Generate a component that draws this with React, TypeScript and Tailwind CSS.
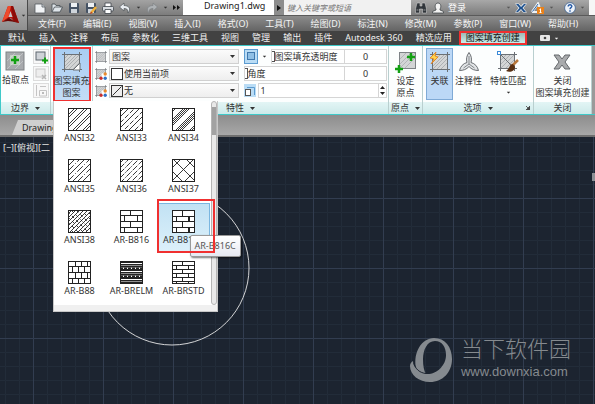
import type { ReactNode } from "react";
import clsx from "clsx";

const MENUS = [
  "文件(F)",
  "编辑(E)",
  "视图(V)",
  "插入(I)",
  "格式(O)",
  "工具(T)",
  "绘图(D)",
  "标注(N)",
  "修改(M)",
  "参数(P)",
  "窗口(W)",
  "帮助(H)",
];

const TABS = [
  "默认",
  "插入",
  "注释",
  "布局",
  "参数化",
  "三维工具",
  "视图",
  "管理",
  "输出",
  "插件",
  "Autodesk 360",
  "精选应用",
];

const HATCHES = [
  "ANSI32",
  "ANSI33",
  "ANSI34",
  "ANSI35",
  "ANSI36",
  "ANSI37",
  "ANSI38",
  "AR-B816",
  "AR-B816C",
  "AR-B88",
  "AR-BRELM",
  "AR-BRSTD",
];

/* ---------- hatch swatches ---------- */

interface DiagonalProps {
  offsets: number[];
  dash?: string;
  flip?: boolean;
}

// 45 degree lines, x + y = offset, clipped by the swatch svg
function Diagonals({ offsets, dash, flip }: DiagonalProps) {
  return (
    <g transform={flip ? "matrix(-1 0 0 1 23 0)" : undefined}>
      {offsets.map((o) => (
        <path key={o} d={`M0 ${o}L${o} 0`} strokeDasharray={dash} />
      ))}
    </g>
  );
}

interface BricksProps {
  rows: number[];
  step: number;
  double?: boolean;
}

function Bricks({ rows, step, double }: BricksProps) {
  const parts: string[] = [];
  rows.forEach((y, i) => {
    const bottom = rows[i + 1] ?? 23;
    parts.push(`M0 ${y + 0.5}H23`);
    for (let x = i % 2 ? 4 : 4 + step / 2; x < 23; x += step) {
      parts.push(`M${Math.floor(x) + 0.5} ${y}V${bottom}`);
    }
    if (double && i % 2) parts.push(`M16.5 ${y}V${bottom}`);
  });
  return <path d={parts.join("")} strokeWidth="1" />;
}

function HatchPattern({ name }: { name: string }) {
  switch (name) {
    case "ANSI32":
      return <Diagonals offsets={[7, 10, 17, 20, 27, 30, 37, 40]} />;
    case "ANSI33":
      return (
        <>
          <Diagonals offsets={[9, 20, 31, 42]} />
          <Diagonals offsets={[4, 15, 26, 37]} dash="5 2" />
        </>
      );
    case "ANSI34":
      return (
        <Diagonals offsets={[4, 12, 14, 16, 18, 26, 28, 30, 32, 40, 42]} />
      );
    case "ANSI35":
      return (
        <>
          <Diagonals offsets={[7, 17, 27, 37]} />
          <Diagonals offsets={[12, 22, 32]} dash="8 2 1 2" />
        </>
      );
    case "ANSI36":
      return (
        <Diagonals offsets={[4, 9, 14, 19, 24, 29, 34, 39, 43]} dash="6 1 1 1" />
      );
    case "ANSI37":
      return (
        <>
          <Diagonals offsets={[9, 22, 35]} />
          <Diagonals offsets={[9, 22, 35]} flip />
        </>
      );
    case "ANSI38":
      return (
        <>
          <Diagonals offsets={[4, 8, 12, 16, 20, 24, 28, 32, 36, 40]} />
          <Diagonals offsets={[5, 10, 15, 20, 25, 30, 35, 40]} dash="3 3" flip />
        </>
      );
    case "AR-B816":
      return <Bricks rows={[0, 5, 11, 17]} step={13} />;
    case "AR-B816C":
      return <Bricks rows={[0, 6, 11, 17]} step={13} double />;
    case "AR-B88":
      return <Bricks rows={[0, 5, 11, 17]} step={6} />;
    case "AR-BRELM":
      return (
        <>
          <path
            d="M0 1H23M0 5.5H23M0 9H23M0 13.5H23M0 17H23M0 21.5H23"
            strokeWidth="2"
          />
          <path d="M0 3.5H23M0 11.5H23M0 19.5H23" strokeWidth="1" />
          <path
            d="M0 7.5H23M0 15.5H23"
            strokeDasharray="3 1"
            strokeWidth="2"
          />
        </>
      );
    default:
      return <Bricks rows={[0, 4, 8, 12, 16, 20]} step={12} />;
  }
}

function Swatch({ name }: { name: string }) {
  return (
    <svg
      viewBox="0 0 23 23"
      className="h-[23px] w-[23px] shrink-0 overflow-hidden bg-white"
      fill="none"
      stroke="#222"
      strokeWidth="0.9"
    >
      <HatchPattern name={name} />
      <rect x="0.5" y="0.5" width="22" height="22" strokeWidth="1" />
    </svg>
  );
}

/* ---------- icons ---------- */

function Caret({ className }: { className?: string }) {
  return (
    <svg viewBox="0 0 5 3" className={clsx("h-[3px] w-[5px] shrink-0", className)}>
      <path d="M0 0H5L2.5 3Z" fill="currentColor" />
    </svg>
  );
}

function AppLogo() {
  return (
    <svg viewBox="0 0 17 18" className="h-[18px] w-[17px]">
      <path d="M6 0H11L17 17L11.500 15L9 12L4 14L0 16Z" fill="#b5140c" />
      <path d="M6 0H9L6.500 11L0 16Z" fill="#ee4a2c" />
      <path d="M9 0H11L17 17L11.500 15Z" fill="#8c0d08" />
      <path d="M8.500 5L10.500 11L6.500 11Z" fill="#c9c9c9" />
      <path d="M0 16L7 12L12 15L17 17L10 15.500L6 15Z" fill="#6d0805" />
    </svg>
  );
}

// hatch preview with the crop marks that all ribbon hatch icons share
function HatchIcon({ size, extra }: { size: "sm" | "lg"; extra?: ReactNode }) {
  return (
    <svg
      viewBox="0 0 20 20"
      className={size === "sm" ? "h-3 w-3 shrink-0" : "h-5 w-5 shrink-0"}
      fill="none"
    >
      <rect x="2.500" y="2.500" width="15" height="15" fill="#d3d5d6" />
      <path
        d="M3 6L6 3M3 10L10 3M3 14L14 3M3 17L17 3M7 17L17 7M11 17L17 11"
        stroke="#a3a6a9"
        strokeWidth="0.8"
      />
      <path d="M2.500 0V20M17.500 0V20M0 2.500H20M0 17.500H20" stroke="#6b7075" />
      {extra}
    </svg>
  );
}

const COLOR_DOTS = (
  <>
    <rect x="11" y="9" width="9" height="11" fill="#fff" />
    <circle cx="17" cy="10" r="2.800" fill="#e98a2c" />
    <circle cx="10" cy="17" r="2.800" fill="#c9302c" />
    <circle cx="17" cy="17" r="2.800" fill="#2f6fc4" />
  </>
);

function PlusMark({ x, y, s = 4 }: { x: number; y: number; s?: number }) {
  return (
    <path
      d={`M${x - s} ${y}H${x + s}M${x} ${y - s}V${y + s}`}
      stroke="#12a012"
      strokeWidth="2.500"
    />
  );
}

function PickPointIcon() {
  return (
    <svg viewBox="0 0 20 20" className="h-5 w-5">
      <rect x="1" y="1" width="18" height="18" fill="#a7aaad" stroke="#7f8386" />
      <path d="M2 10L10 2M2 18L18 2M10 18L18 10" stroke="#bfc2c4" />
      <rect x="5" y="4" width="10" height="10" fill="#dff3dc" opacity=".5" />
      <PlusMark x={10} y={9} />
    </svg>
  );
}

function OriginIcon() {
  return (
    <svg viewBox="0 0 22 22" className="h-[22px] w-[22px]" fill="none">
      <rect x="4.500" y="1.500" width="16" height="16" fill="#d3d5d6" stroke="#7d8286" />
      <path d="M5 8L11 2M5 13L16 2M5 17L20 2M10 17L20 7" stroke="#a9acaf" strokeWidth=".8" />
      <PlusMark x={16} y={6} />
      <PlusMark x={4} y={18} />
    </svg>
  );
}

function SmallBoundaryIcon({ kind }: { kind: "add" | "remove" | "recreate" }) {
  const muted = kind !== "add";
  return (
    <svg viewBox="0 0 14 14" className="h-[14px] w-[14px]" fill="none">
      {kind === "recreate" ? (
        <path d="M2.500 1V12M5.500 12V6.500H12.500V12ZM6 2.500H12" stroke="#c4c4c4" />
      ) : (
        <rect
          x="2"
          y="2"
          width="9"
          height="8"
          fill={muted ? "#eee" : "#cfd3d8"}
          stroke={muted ? "#c8c8c8" : "#5d666e"}
        />
      )}
      {kind === "add" && <path d="M8 10.500H14M11 7.500V13.500" stroke="#12a012" strokeWidth="2" />}
      {kind === "remove" && <path d="M8 8L12 12M12 8L8 12" stroke="#b5b5b5" strokeWidth="1.500" />}
      {kind === "recreate" && <rect x="8" y="8" width="2" height="2" fill="#bbb" />}
    </svg>
  );
}

// three tapered blades around a centre point
function AnnotativeIcon() {
  return (
    <svg viewBox="0 0 20 20" className="h-5 w-5" fill="#e1e4e6" stroke="#5c6165" strokeWidth=".9">
      <path d="M10 0.500C12.500 4 13 7 12 10.500C16 11.500 18.500 14.500 19.500 18.500C16 18.500 12.500 17.500 10 14.500C7.500 17.500 4 18.500 0.500 18.500C1.500 14.500 4 11.500 8 10.500C7 7 7.500 4 10 0.500Z" />
      <path d="M10 4V12L4.500 16M10 12L15.500 16" fill="none" strokeWidth=".7" />
    </svg>
  );
}

function MatchIcon() {
  return (
    <svg viewBox="0 0 22 22" className="h-[22px] w-[22px]" fill="none">
      <rect x="3.500" y="3.500" width="14" height="14" fill="#d3d5d6" />
      <path d="M4 9L9 4M4 13L13 4M4 17L17 4M9 17L17 9" stroke="#a3a6a9" strokeWidth=".8" />
      <path d="M3.500 1V20M17.500 1V20M1 3.500H20M1 17.500H20M4 4L17 17" stroke="#6b7075" />
      <rect x="0.500" y="0.500" width="3" height="3" fill="#fff" stroke="#3b8ad8" />
      <path d="M21 9L15 15" stroke="#b9793e" strokeWidth="2.500" />
      <path d="M16 13C12 13 13 18 9 20C13 22 18 20 18 16Z" fill="#5a3013" />
    </svg>
  );
}

function CloseIcon() {
  return (
    <svg viewBox="0 0 18 16" className="h-4 w-[18px]">
      <path
        d="M1 1H6L9 5L12 1H17L12 8L17 15H12L9 11L6 15H1L6 8Z"
        fill="#a9abad"
        stroke="#65696c"
      />
    </svg>
  );
}

function DocIcon() {
  return (
    <svg viewBox="0 0 12 12" className="h-3 w-3" fill="#f2f4f6" stroke="#555b61" strokeWidth=".8">
      <path d="M1 2H8L11 5V11H1Z" />
      <path d="M8 2V5H11" fill="#ccd2d8" />
    </svg>
  );
}

function OpenIcon() {
  return (
    <svg viewBox="0 0 12 12" className="h-3 w-3" fill="#dfe5ea" stroke="#454b51" strokeWidth=".8">
      <path d="M1 10V2H4L5 3.500H9V5" />
      <path d="M1 10L3.500 5H11.500L9 10Z" />
    </svg>
  );
}

function SaveIcon({ pencil }: { pencil?: boolean }) {
  return (
    <svg viewBox="0 0 12 12" className="h-3 w-3">
      <rect x="1" y="1" width="10" height="10" rx="1" fill="#465364" />
      <rect x="3" y="1" width="6" height="4" fill="#eef1f4" />
      <rect x="3" y="7" width="6" height="4" fill="#cfd5db" />
      {pencil && <path d="M11 5L6 11" stroke="#f0b13a" strokeWidth="2.500" />}
      {pencil && <path d="M5 12L6 9.500L7.500 11Z" fill="#b63a22" />}
    </svg>
  );
}

function PrintIcon() {
  return (
    <svg viewBox="0 0 12 12" className="h-3 w-3" strokeWidth=".8" stroke="#3f454b">
      <path d="M3 5V1H9V5" fill="#fff" />
      <rect x="0.500" y="4.500" width="11" height="4.500" rx="1" fill="#d8dce0" />
      <path d="M3 7.500H9V11.500H3Z" fill="#fff" />
    </svg>
  );
}

function UndoIcon({ redo }: { redo?: boolean }) {
  return (
    <svg viewBox="0 0 12 12" className={clsx("h-3 w-3", redo && "-scale-x-100")}>
      <path
        d="M5 1L0.500 5L5 9V6.500C8 6.500 9.500 8 9 11C12.500 7 10 3.500 5 3.500Z"
        fill={redo ? "#aeb2b5" : "#e9edf1"}
        stroke={redo ? "#7e8285" : "#4d5358"}
        strokeWidth=".7"
      />
    </svg>
  );
}

function BinocularsIcon() {
  return (
    <svg viewBox="0 0 12 12" className="h-3 w-3" fill="#30353a" stroke="#dadada" strokeWidth=".5">
      <path d="M2 1H5V4H7V1H10L11.500 7V11H7.500V7H4.500V11H0.500V7Z" />
      <path d="M1.500 8H3.500M8.500 8H10.500" stroke="#fff" />
    </svg>
  );
}

function UserIcon() {
  return (
    <svg viewBox="0 0 12 12" className="h-3 w-3" fill="#f3f3f3" stroke="#41464a" strokeWidth=".8">
      <path d="M0.500 11V9.500L4 8V7C2.500 5 3 1 6 1S9.500 5 8 7V8L11.500 9.500V11Z" />
    </svg>
  );
}

function ExchangeIcon() {
  return (
    <svg viewBox="0 0 12 12" className="h-3 w-3">
      <path d="M0 1.500H4L6 4L8 1.500H12L8.500 6L12 10.500H8L6 8L4 10.500H0L3.500 6Z" fill="#e8eef5" />
      <path d="M1 2H3.500L6 5L9 2H11L7.500 6L11 10H8.500L6 7L3 10H1L4.500 6Z" fill="#1c4f8c" />
    </svg>
  );
}

function CloudIcon() {
  return (
    <svg viewBox="0 0 14 12" className="h-3 w-[14px]" fill="none">
      <path d="M1 10L7 1.500L8.500 5M1 10H6" stroke="#eef2f6" strokeWidth="2.200" />
      <path d="M1.500 9.500L7 2" stroke="#2f66a8" />
      <rect x="6" y="5" width="7" height="7" fill="#e8821c" />
      <path d="M9.500 6.500V10.500M8.500 10.500H10.500M8.500 7.500H9.500" stroke="#fff" />
    </svg>
  );
}

function HelpIcon() {
  return (
    <svg viewBox="0 0 12 12" className="h-3 w-3" fill="none">
      <circle cx="6" cy="6" r="5.400" fill="#eef3f9" stroke="#3f6290" strokeWidth=".8" />
      <path d="M4.200 4.500C4.200 2 8 2.300 7.800 4.500C7.700 5.700 6 5.700 6 7.200M6 8.300V9.800" stroke="#2459a6" strokeWidth="1.400" />
    </svg>
  );
}

function CameraIcon() {
  return (
    <svg viewBox="0 0 10 6" className="h-[6px] w-[10px]">
      <rect width="10" height="6" rx="1" fill="#e6e6e6" />
      <circle cx="5" cy="3" r="1.300" fill="#444" />
    </svg>
  );
}

/* ---------- bars ---------- */

function ToolButton({ label, children }: { label: string; children: ReactNode }) {
  return (
    <button type="button" aria-label={label} className="flex shrink-0 items-center">
      {children}
    </button>
  );
}

function TitleBar() {
  return (
    <div className="flex h-[15px] items-stretch">
      <div className="flex w-[155px] shrink-0 items-center gap-[5px] bg-linear-to-b from-[#a3a3a3] to-[#7c7c7c] pl-[6px] text-[#333]">
        <ToolButton label="新建"><DocIcon /></ToolButton>
        <ToolButton label="打开"><OpenIcon /></ToolButton>
        <ToolButton label="保存"><SaveIcon /></ToolButton>
        <ToolButton label="另存为"><SaveIcon pencil /></ToolButton>
        <ToolButton label="打印"><PrintIcon /></ToolButton>
        <ToolButton label="放弃"><UndoIcon /></ToolButton>
        <Caret className="scale-75" />
        <ToolButton label="重做"><UndoIcon redo /></ToolButton>
        <Caret className="scale-75" />
        <svg viewBox="0 0 7 5" className="h-[5px] w-[7px]">
          <path d="M0 0L3 2.500L0 5ZM4 0L7 2.500L4 5Z" fill="#111" />
        </svg>
      </div>
      <div className="w-[91px] shrink-0 bg-white pl-[21px] text-[9px] leading-3 text-[#222]">
        Drawing1.dwg
      </div>
      <button
        type="button"
        aria-label="展开搜索"
        className="flex w-[10px] shrink-0 items-center justify-center bg-[#8d8d8d]"
      >
        <svg viewBox="0 0 4 6" className="h-[6px] w-1">
          <path d="M0 0L4 3L0 6Z" fill="#111" />
        </svg>
      </button>
      <input
        type="text"
        aria-label="搜索"
        placeholder="键入关键字或短语"
        className="min-w-0 flex-1 bg-[#f1f1f1] pl-[3px] text-[8px] italic outline-none placeholder:text-[#777]"
      />
      <div className="flex w-[178px] shrink-0 items-center bg-linear-to-b from-[#a8a8a8] to-[#7c7c7c] pl-1 text-[#555]">
        <ToolButton label="查找"><BinocularsIcon /></ToolButton>
        <button type="button" className="ml-[5px] flex items-center gap-1 text-[9px] leading-3 text-white">
          <UserIcon />
          登录
        </button>
        <Caret className="ml-auto scale-75" />
        <div className="ml-1 flex items-center gap-1">
          <ToolButton label="Exchange"><ExchangeIcon /></ToolButton>
          <ToolButton label="A360"><CloudIcon /></ToolButton>
          <Caret className="scale-75" />
        </div>
        <div className="ml-[10px] flex items-center gap-1 pr-1">
          <ToolButton label="帮助"><HelpIcon /></ToolButton>
          <Caret className="scale-75" />
        </div>
      </div>
      <div className="w-[6px] shrink-0 bg-[#f6f6f6]" />
    </div>
  );
}

function Header() {
  return (
    <header>
      <div className="flex">
        <button
          type="button"
          aria-label="应用程序菜单"
          className="flex w-7 shrink-0 items-center justify-center gap-[2px] border-r border-b border-[#4a4a4a] bg-linear-to-b from-[#b4b4b4] to-[#8e8e8e] text-[#333]"
        >
          <AppLogo />
          <Caret className="scale-75" />
        </button>
        <div className="min-w-0 flex-1">
          <TitleBar />
          <nav className="flex h-4 items-center gap-[17px] overflow-hidden border-t border-[#5a5a5a] bg-linear-to-b from-[#8c8c8c] to-[#646464] pl-[10px] text-[9px] leading-3 whitespace-nowrap text-[#f4f4f4]">
            {MENUS.map((menu) => (
              <button key={menu} type="button" className="shrink-0">
                {menu}
              </button>
            ))}
          </nav>
        </div>
      </div>
      <nav className="flex h-[14px] items-center gap-[13px] overflow-hidden bg-[#424242] pl-2 text-[9px] leading-3 whitespace-nowrap text-[#f0f0f0]">
        {TABS.map((tab) => (
          <button key={tab} type="button" className="shrink-0">
            {tab}
          </button>
        ))}
        <button
          type="button"
          className="-ml-[6px] flex h-[14px] shrink-0 items-center border-2 border-[#f03030] bg-linear-to-b from-[#9fb9b6] to-[#c9efec] px-[5px] text-[#111]"
        >
          图案填充创建
        </button>
        <button type="button" aria-label="录制" className="flex shrink-0 items-center gap-1">
          <CameraIcon />
          <Caret className="scale-75" />
        </button>
      </nav>
    </header>
  );
}

/* ---------- ribbon ---------- */

interface PanelProps {
  title: string;
  caret?: boolean;
  launcher?: boolean;
  className: string;
  children: ReactNode;
}

function Panel({ title, caret, launcher, className, children }: PanelProps) {
  return (
    <section className={clsx("flex flex-col border-r border-[#b9cfcf]", className)}>
      <div className="flex h-14 justify-center">{children}</div>
      <div className="relative flex h-3 items-center justify-center gap-[6px] bg-linear-to-b from-[#e3f5f5] to-[#cdeaea] leading-3 text-[#333]">
        {title}
        {caret && <Caret />}
        {launcher && (
          <svg viewBox="0 0 4 4" className="absolute right-[3px] h-1 w-1">
            <path d="M4 0V4H0ZM0 0L3 3" fill="#444" stroke="#444" strokeWidth=".8" />
          </svg>
        )}
      </div>
    </section>
  );
}

const SELECT_CLASS =
  "h-[15px] w-full min-w-0 appearance-none border border-[#d0d0d0] bg-linear-to-b from-[#fbfbfb] to-[#eeeeee] pr-3 text-[9px] leading-3 text-[#333] outline-none";

interface ComboProps {
  label: string;
  value: string;
  icon: ReactNode;
  chip?: ReactNode;
}

function Combo({ label, value, icon, chip }: ComboProps) {
  return (
    <label className="flex items-center gap-[2px]">
      {icon}
      <span className="relative flex min-w-0 flex-1 items-center">
        <select aria-label={label} className={clsx(SELECT_CLASS, chip ? "pl-[14px]" : "pl-[2px]")}>
          <option>{value}</option>
        </select>
        {chip && <span className="absolute left-[2px]">{chip}</span>}
        <Caret className="absolute right-1 text-[#333]" />
      </span>
    </label>
  );
}

function PropertyCombos() {
  return (
    <div className="flex min-w-0 flex-1 flex-col gap-[2px]">
      <Combo label="图案填充类型" value="图案" icon={<HatchIcon size="sm" />} />
      <Combo
        label="图案填充颜色"
        value="使用当前项"
        icon={<HatchIcon size="sm" extra={COLOR_DOTS} />}
        chip={
          <svg viewBox="0 0 12 12" className="h-3 w-3">
            <rect x="0.500" y="0.500" width="11" height="11" fill="#fff" stroke="#333" />
          </svg>
        }
      />
      <Combo
        label="背景色"
        value="无"
        icon={<HatchIcon size="sm" extra={COLOR_DOTS} />}
        chip={
          <svg viewBox="0 0 12 12" className="h-3 w-3">
            <rect x="0.500" y="0.500" width="11" height="11" fill="#eee" stroke="#333" />
            <path d="M1.500 10.500L10.500 1.500" stroke="#333" />
          </svg>
        }
      />
    </div>
  );
}

function ValueField({ id, label }: { id: string; label: string }) {
  return (
    <div className="flex h-[15px] min-w-0 flex-1 border border-[#d5d5d5] bg-white">
      <span className="my-px w-[3px] shrink-0 border-y border-r border-[#555]" />
      <label htmlFor={id} className="flex-1 overflow-hidden leading-[13px] whitespace-nowrap">
        {label}
      </label>
      <input
        id={id}
        type="text"
        defaultValue="0"
        className="w-[42px] border-l border-[#d5d5d5] text-center text-[9px] leading-3 outline-none"
      />
    </div>
  );
}

function PropertyValues() {
  return (
    <div className="flex min-w-0 flex-1 flex-col gap-[2px]">
      <div className="flex items-center gap-1">
        <ToolButton label="透明度来源">
          <svg viewBox="0 0 14 15" className="h-[15px] w-[14px]">
            <rect x="0.500" y="0.500" width="13" height="14" fill="#b9dcf5" stroke="#5b9bd0" />
            <rect x="3.500" y="3.500" width="7" height="7" fill="#8fc0e6" stroke="#3f78ad" />
          </svg>
        </ToolButton>
        <Caret className="scale-75" />
        <ValueField id="transparency" label="图案填充透明度" />
      </div>
      <div className="flex">
        <ValueField id="angle" label="角度" />
      </div>
      <div className="flex items-center gap-[2px]">
        <svg viewBox="0 0 12 14" className="h-[14px] w-3 shrink-0">
          <rect width="12" height="13" fill="#b9dcf5" />
          <rect x="1.500" y="5.500" width="5" height="6" fill="#fff" stroke="#555" />
          <path d="M3 3.500H10.500V11" fill="none" stroke="#5b9bd0" />
        </svg>
        <div className="flex h-[15px] min-w-0 flex-1 border border-[#d5d5d5] bg-white">
          <input
            type="text"
            aria-label="比例"
            defaultValue="1"
            className="min-w-0 flex-1 pl-[2px] text-[9px] leading-3 outline-none"
          />
          <div className="flex w-2 flex-col justify-around border-l border-[#d5d5d5] text-[#222]">
            <button type="button" aria-label="增大" className="flex justify-center">
              <Caret className="rotate-180" />
            </button>
            <button type="button" aria-label="减小" className="flex justify-center">
              <Caret />
            </button>
          </div>
        </div>
      </div>
    </div>
  );
}

function HatchCell({ name, selected }: { name: string; selected: boolean }) {
  return (
    <div className="relative h-[51px]">
      <button
        type="button"
        className={clsx(
          "flex h-[49px] w-full flex-col items-center gap-px border pt-[6px] leading-3 text-[#333]",
          selected
            ? "border-[#7ab6e0] bg-linear-to-b from-[#c2e2f4] to-[#dcf0fa]"
            : "border-transparent"
        )}
      >
        <Swatch name={name} />
        <span className="whitespace-nowrap">{name}</span>
      </button>
      {selected && (
        <>
          <span className="absolute top-8 left-8 z-10 rounded-[2px] border border-[#999] bg-linear-to-b from-white to-[#e6e9f2] px-1 py-1 leading-3 whitespace-nowrap text-[#555] shadow-[1px_1px_2px_#0008]">
            {name}
          </span>
          <span className="pointer-events-none absolute -top-1 -left-px z-20 h-[54px] w-[58px] border-2 border-[#f03030]" />
        </>
      )}
    </div>
  );
}

function HatchGallery() {
  return (
    <div className="absolute top-[55px] left-0 z-10 w-[165px] border-x border-b border-[#c8c8c8] bg-white text-[9px]">
      <div className="flex gap-px">
        <div className="grid flex-1 grid-cols-3">
          {HATCHES.map((name) => (
            <HatchCell key={name} name={name} selected={name === "AR-B816C"} />
          ))}
        </div>
        <div className="w-[6px] rounded-[3px] border border-[#b5b5b5] bg-[#e9e9e9] pt-[5px]">
          <div className="h-7 bg-[#a2a2a2]" />
        </div>
      </div>
      <div className="h-[6px] bg-[#f0f0f0]" />
    </div>
  );
}

interface BigButtonProps {
  icon: ReactNode;
  lines: string[];
  className?: string;
  caret?: boolean;
}

function BigButton({ icon, lines, className, caret }: BigButtonProps) {
  return (
    <button
      type="button"
      className={clsx(
        "flex flex-col items-center text-[9px] leading-3 whitespace-nowrap text-[#333]",
        className
      )}
    >
      <span className="flex h-[26px] items-center">{icon}</span>
      {lines.map((line) => (
        <span key={line}>{line}</span>
      ))}
      {caret && <Caret className="mt-1 scale-75" />}
    </button>
  );
}

function Ribbon() {
  return (
    <div className="relative z-10 flex border-y border-[#3fc9c9] bg-[#9a9a9a] pr-[3px] text-[9px] text-[#333]">
      <div className="flex min-w-0 flex-1 border-l border-[#3fc9c9] bg-[#fcfefe]">
        <Panel title="边界" caret className="w-[50px]">
          <BigButton icon={<PickPointIcon />} lines={["拾取点"]} className="pt-[2px]" />
          <div className="flex flex-col gap-[2px] pt-[3px] pl-1">
            {(["add", "remove", "recreate"] as const).map((kind) => (
              <button
                key={kind}
                type="button"
                aria-label={kind}
                className="flex h-[15px] w-4 items-center justify-center border border-[#dcdcdc] bg-[#f8f8f8]"
              >
                <SmallBoundaryIcon kind={kind} />
              </button>
            ))}
          </div>
        </Panel>

        <Panel title="图案" className="w-[42px]">
          <div className="relative">
            <BigButton
              icon={
                <HatchIcon
                  size="lg"
                  extra={<path d="M18 11L11 18H18Z" fill="#fff" stroke="#6b7075" />}
                />
              }
              lines={["图案填充", "图案"]}
              className="mt-px h-[55px] w-[38px] border-2 border-[#f03030] bg-linear-to-b from-[#a9cdf2] to-[#c3dcf6]"
            />
            <HatchGallery />
          </div>
        </Panel>

        <Panel title="特性" caret className="min-w-0 flex-1">
          <div className="flex min-w-0 flex-1 gap-[5px] pt-[3px] pr-px pl-[2px]">
            <PropertyCombos />
            <PropertyValues />
          </div>
        </Panel>

        <Panel title="原点" caret className="w-[34px]">
          <BigButton icon={<OriginIcon />} lines={["设定", "原点"]} className="pt-[3px]" />
        </Panel>

        <Panel title="选项" caret launcher className="w-[111px]">
          <div className="flex flex-1 gap-[2px] pt-[2px] pl-[3px]">
            <BigButton
              icon={
                <HatchIcon
                  size="lg"
                  extra={
                    <path
                      d="M6 0L0 6L4 7L1 12L8 5L5 4Z"
                      fill="#ffd34d"
                      stroke="#e07b1a"
                      strokeWidth=".8"
                    />
                  }
                />
              }
              lines={["关联"]}
              className="h-[52px] w-[27px] border border-[#7faad6] bg-[#bcd8f6]"
            />
            <BigButton icon={<AnnotativeIcon />} lines={["注释性"]} className="pt-px" />
            <BigButton icon={<MatchIcon />} lines={["特性匹配"]} caret className="pt-px pl-[6px]" />
          </div>
        </Panel>

        <Panel title="关闭" className="w-[58px]">
          <BigButton icon={<CloseIcon />} lines={["关闭", "图案填充创建"]} className="pt-[3px]" />
        </Panel>
      </div>
    </div>
  );
}

/* ---------- drawing area ---------- */

function FileTabs() {
  return (
    <div className="flex h-[22px] items-end border-b-2 border-[#6f6f6f] bg-linear-to-b from-[#8d8d8d] to-[#a8a8a8]">
      <button
        type="button"
        className="ml-3 h-[15px] w-24 bg-[#cfcfcf] pl-[10px] text-left text-[9px] leading-3 text-[#222] [clip-path:polygon(6px_0,100%_0,100%_100%,0_100%)]"
      >
        Drawing1*
      </button>
    </div>
  );
}

function Watermark() {
  return (
    <div className="absolute right-6 bottom-5 flex items-center gap-2 text-[#858a8f]">
      <svg viewBox="0 0 43 44" className="h-11 w-[43px]" fill="currentColor">
        <path
          fillRule="evenodd"
          d="M24 0C35 0 42 9 42 21C42 34 33 44 20 44C9 44 0 37 0 28C0 26 1 24 3 23C3 26 4 28 6 30C3 14 12 0 24 0ZM25 3C17 3 13 12 13 21C13 28 14 33 16 36C26 37 36 28 36 17C36 9 32 3 25 3Z"
        />
        <path d="M4 25C5 31 10 35 16 35.500" fill="none" stroke="#1c2430" strokeWidth="1" />
      </svg>
      <div className="flex flex-col">
        <span className="text-[22px] leading-6 font-light">当下软件园</span>
        <span className="font-['Liberation_Sans',sans-serif] text-[13px] leading-6">
          www.downxia.com
        </span>
      </div>
    </div>
  );
}

function DrawingArea() {
  return (
    <main className="relative flex-1 overflow-hidden bg-[#1c2430]">
      <svg className="absolute inset-0 h-full w-full" fill="none">
        <defs>
          <pattern id="minor" x="5" y="5" width="14" height="14" patternUnits="userSpaceOnUse">
            <path d="M14 0.500H0.500V14" stroke="#222c39" />
          </pattern>
          <pattern id="major" x="33" y="61" width="70" height="70" patternUnits="userSpaceOnUse">
            <path d="M70 0.500H0.500V70" stroke="#323d50" />
          </pattern>
        </defs>
        <rect width="100%" height="100%" fill="url(#minor)" />
        <rect width="100%" height="100%" fill="url(#major)" />
        <circle cx="172" cy="131" r="77" stroke="#e8e8e8" strokeWidth=".9" />
      </svg>
      <p className="relative w-[50px] overflow-hidden pt-[5px] pl-[3px] text-[9px] leading-3 whitespace-nowrap text-[#e4e4e4]">
        [−][俯视][二维
      </p>
      <span className="absolute top-9 right-0 h-2 w-[3px] bg-[#8c9095]" />
      <Watermark />
    </main>
  );
}

export default function App() {
  return (
    <div className="flex min-h-screen flex-col font-['Noto_Sans','Noto_Sans_CJK_SC',sans-serif]">
      <Header />
      <Ribbon />
      <FileTabs />
      <DrawingArea />
    </div>
  );
}
